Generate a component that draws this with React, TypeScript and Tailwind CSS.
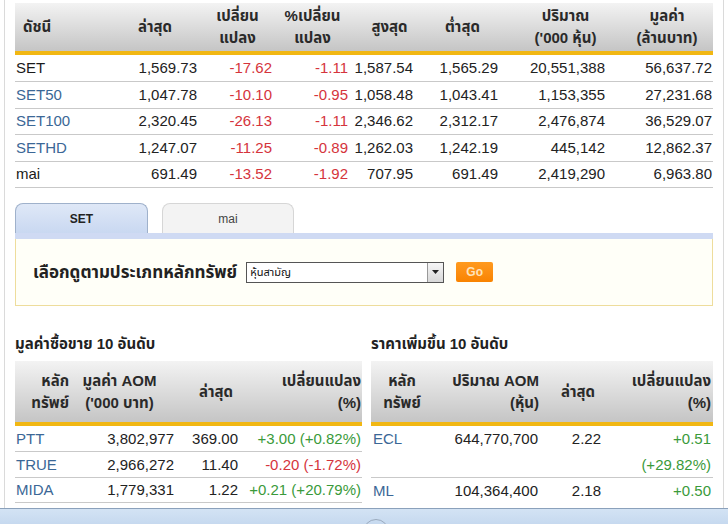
const FONT = "font-['Liberation_Sans','Noto_Sans_Thai','Noto_Sans',Tahoma,sans-serif]"

type IndexRow = {
  name: string
  blue: boolean
  last: string
  chg: string
  pct: string
  high: string
  low: string
  vol: string
  val: string
}

const indexRows: IndexRow[] = [
  { name: 'SET', blue: false, last: '1,569.73', chg: '-17.62', pct: '-1.11', high: '1,587.54', low: '1,565.29', vol: '20,551,388', val: '56,637.72' },
  { name: 'SET50', blue: true, last: '1,047.78', chg: '-10.10', pct: '-0.95', high: '1,058.48', low: '1,043.41', vol: '1,153,355', val: '27,231.68' },
  { name: 'SET100', blue: true, last: '2,320.45', chg: '-26.13', pct: '-1.11', high: '2,346.62', low: '2,312.17', vol: '2,476,874', val: '36,529.07' },
  { name: 'SETHD', blue: true, last: '1,247.07', chg: '-11.25', pct: '-0.89', high: '1,262.03', low: '1,242.19', vol: '445,142', val: '12,862.37' },
  { name: 'mai', blue: false, last: '691.49', chg: '-13.52', pct: '-1.92', high: '707.95', low: '691.49', vol: '2,419,290', val: '6,963.80' },
]

const topValue = [
  { sym: 'PTT', value: '3,802,977', last: '369.00', chg: '+3.00 (+0.82%)', up: true },
  { sym: 'TRUE', value: '2,966,272', last: '11.40', chg: '-0.20 (-1.72%)', up: false },
  { sym: 'MIDA', value: '1,779,331', last: '1.22', chg: '+0.21 (+20.79%)', up: true },
]

const topGainers = [
  { sym: 'ECL', volume: '644,770,700', last: '2.22', chg: '+0.51', pct: '(+29.82%)' },
  { sym: 'ML', volume: '104,364,400', last: '2.18', chg: '+0.50', pct: '(+20.76%)' },
]

const headCell = 'bg-linear-to-b from-[#f3f3f3] to-[#c5c5c5] font-bold text-[#2a2a2a] leading-[22px] align-middle'
const yellowLine = 'h-[4px] bg-[#f1b713] p-0'

function HeaderBar({ cols }: { cols: number }) {
  return (
    <tr>
      <td colSpan={cols} className={yellowLine}></td>
    </tr>
  )
}

function IndexTable() {
  return (
    <table className="w-[698px] table-fixed border-collapse text-[15px] text-[#222]">
      <colgroup>
        <col className="w-[95px]" />
        <col className="w-[90px]" />
        <col className="w-[75px]" />
        <col className="w-[75px]" />
        <col className="w-[65px]" />
        <col className="w-[85px]" />
        <col className="w-[107px]" />
        <col className="w-[106px]" />
      </colgroup>
      <thead>
        <tr className="h-[48px]">
          <th className={`${headCell} text-left pl-[8px]`}>ดัชนี</th>
          <th className={`${headCell} text-center`}>ล่าสุด</th>
          <th className={`${headCell} text-center`}>เปลี่ยน<br />แปลง</th>
          <th className={`${headCell} text-center`}>%เปลี่ยน<br />แปลง</th>
          <th className={`${headCell} text-center pl-[14px]`}>สูงสุด</th>
          <th className={`${headCell} text-center pl-[10px]`}>ต่ำสุด</th>
          <th className={`${headCell} text-center pl-[24px]`}>ปริมาณ<br />('000 หุ้น)</th>
          <th className={`${headCell} text-center pl-[14px]`}>มูลค่า<br />(ล้านบาท)</th>
        </tr>
        <HeaderBar cols={8} />
      </thead>
      <tbody>
        {indexRows.map(row => (
          <tr key={row.name} className="h-[26.6px] border-b border-[#c9c9c9]">
            <td className={`pl-[1px] ${row.blue ? 'text-[#3b6796]' : 'text-[#1a1a1a]'}`}>{row.name}</td>
            <td className="text-right pr-[3px]">{row.last}</td>
            <td className="text-right pr-[3px] text-[#d5343c]">{row.chg}</td>
            <td className="text-right pr-[2px] text-[#d5343c]">{row.pct}</td>
            <td className="text-right pr-[2px]">{row.high}</td>
            <td className="text-right pr-[2px]">{row.low}</td>
            <td className="text-right pr-[2px]">{row.vol}</td>
            <td className="text-right pr-[1px]">{row.val}</td>
          </tr>
        ))}
      </tbody>
    </table>
  )
}

function Tabs() {
  return (
    <div className="mt-[15px]">
      <div className="flex h-[30px] items-end gap-[14px]">
        <div className="flex h-[30px] w-[133px] items-center justify-center rounded-t-[8px] border border-b-0 border-[#9fb1cb] bg-linear-to-b from-[#dfe8f7] to-[#c9d8f1] text-[12px] font-bold text-[#222]">
          SET
        </div>
        <div className="flex h-[30px] w-[132px] items-center justify-center rounded-t-[8px] border border-b-0 border-[#d6d6d6] bg-[#f3f3f3] text-[12px] text-[#444]">
          mai
        </div>
      </div>
      <div className="h-[6px] bg-[#cfdaf3]"></div>
      <div className="flex h-[67px] items-center border border-t-0 border-[#eedd9c] bg-[#fffff8] pl-[17px]">
        <span className="text-[17px] font-bold text-[#222]">เลือกดูตามประเภทหลักทรัพย์</span>
        <div className="ml-[9px] flex h-[21px] w-[198px] items-stretch border border-[#555] bg-white">
          <span className="flex-1 pl-[3px] text-[11px] leading-[19px] text-[#111]">หุ้นสามัญ</span>
          <span className="flex w-[16px] items-center justify-center border-l border-[#999] bg-linear-to-b from-[#f6f6f6] to-[#d8d8d8]">
            <svg width="7" height="4" viewBox="0 0 7 4">
              <path d="M0 0h7L3.5 4z" fill="#222" />
            </svg>
          </span>
        </div>
        <button className="ml-[12px] flex h-[20px] w-[37px] items-center justify-center rounded-[2px] bg-linear-to-b from-[#ff9a1e] to-[#f98300] text-[12px] font-bold text-[#ffe3bb]">
          Go
        </button>
      </div>
    </div>
  )
}

function TopValueTable() {
  return (
    <table className="w-[347px] table-fixed border-collapse text-[15px] text-[#222]">
      <colgroup>
        <col className="w-[60px]" />
        <col className="w-[103px]" />
        <col className="w-[62px]" />
        <col className="w-[122px]" />
      </colgroup>
      <thead>
        <tr className="h-[61px]">
          <th className={`${headCell} text-right pr-[6px]`}>หลัก<br />ทรัพย์</th>
          <th className={`${headCell} text-center pr-[14px]`}>มูลค่า AOM<br />('000 บาท)</th>
          <th className={`${headCell} text-center pl-[14px]`}>ล่าสุด</th>
          <th className={`${headCell} text-right pr-[1px]`}>เปลี่ยนแปลง<br />(%)</th>
        </tr>
        <HeaderBar cols={4} />
      </thead>
      <tbody>
        {topValue.map(row => (
          <tr key={row.sym} className="h-[25.5px] border-b border-[#c9c9c9] leading-[24px]">
            <td className="pl-[1px] text-[#3b6796]">{row.sym}</td>
            <td className="text-right pr-[4px]">{row.value}</td>
            <td className="text-right pr-[2px]">{row.last}</td>
            <td className={`text-right whitespace-nowrap pr-[1px] ${row.up ? 'text-[#3a9a3a]' : 'text-[#d5343c]'}`}>{row.chg}</td>
          </tr>
        ))}
      </tbody>
    </table>
  )
}

function TopGainerTable() {
  return (
    <table className="w-[342px] table-fixed border-collapse text-[15px] text-[#222]">
      <colgroup>
        <col className="w-[70px]" />
        <col className="w-[100px]" />
        <col className="w-[62px]" />
        <col className="w-[110px]" />
      </colgroup>
      <thead>
        <tr className="h-[61px]">
          <th className={`${headCell} text-center pr-[8px]`}>หลัก<br />ทรัพย์</th>
          <th className={`${headCell} text-right pr-[2px]`}>ปริมาณ AOM<br />(หุ้น)</th>
          <th className={`${headCell} text-center pl-[12px]`}>ล่าสุด</th>
          <th className={`${headCell} text-right pr-[2px]`}>เปลี่ยนแปลง<br />(%)</th>
        </tr>
        <HeaderBar cols={4} />
      </thead>
      <tbody>
        {topGainers.map(row => (
          <tr key={row.sym} className="border-b border-[#c9c9c9] align-top leading-[25.5px]">
            <td className="pl-[2px] text-[#3b6796]">{row.sym}</td>
            <td className="text-right pr-[3px]">{row.volume}</td>
            <td className="text-right pr-[2px]">{row.last}</td>
            <td className="text-right pr-[2px] text-[#3a9a3a]">
              {row.chg}
              <br />
              {row.pct}
            </td>
          </tr>
        ))}
      </tbody>
    </table>
  )
}

export default function App() {
  return (
    <div className={`${FONT} relative flex h-[524px] w-[728px] flex-col overflow-hidden bg-white`}>
      <div className="ml-[4px] w-[720px] flex-1 overflow-hidden border-x border-[#dadada] px-[10px] pt-[3px]">
        <IndexTable />
        <Tabs />
        <div className="mt-[28px] flex gap-[9px]">
          <section>
            <h2 className="mb-[7px] text-[15px] font-bold leading-[20px] text-[#222]">มูลค่าซื้อขาย 10 อันดับ</h2>
            <TopValueTable />
          </section>
          <section>
            <h2 className="mb-[7px] text-[15px] font-bold leading-[20px] text-[#222]">ราคาเพิ่มขึ้น 10 อันดับ</h2>
            <TopGainerTable />
          </section>
        </div>
      </div>
      <div className="h-[16px] border-t border-[#8ba1bb] bg-linear-to-b from-[#d3e3f4] to-[#c6d9ef]"></div>
      <div className="absolute left-[363px] top-[519px] h-[26px] w-[26px] rounded-full border border-[#9aaabd]"></div>
    </div>
  )
}
